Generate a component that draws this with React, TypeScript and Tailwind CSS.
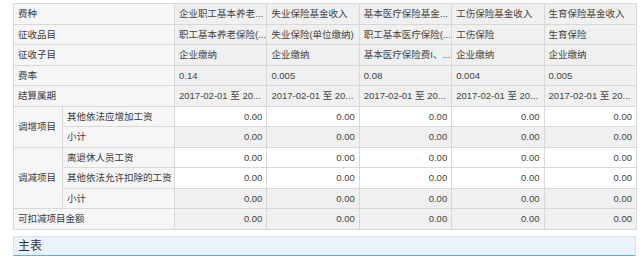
const font = { fontFamily: '"Liberation Sans", "Noto Sans CJK SC", sans-serif' };

const cols = ["yl", "sy", "yb", "gs", "sb"];

const infoRows = [
  { label: "费种", values: ["企业职工基本养老...", "失业保险基金收入", "基本医疗保险基金...", "工伤保险基金收入", "生育保险基金收入"] },
  { label: "征收品目", values: ["职工基本养老保险(...", "失业保险(单位缴纳)", "职工基本医疗保险(...", "工伤保险", "生育保险"] },
  { label: "征收子目", values: ["企业缴纳", "企业缴纳", "基本医疗保险费I、...", "企业缴纳", "企业缴纳"] },
  { label: "费率", values: ["0.14", "0.005", "0.08", "0.004", "0.005"] },
  { label: "结算属期", values: Array(5).fill("2017-02-01 至 20...") },
];

const cell = "border border-[#d8d8d8] h-[20.5px] px-[4px] whitespace-nowrap overflow-hidden";
const label = `${cell} bg-[#f6f6f6] text-[#3a3a3a]`;

function Amounts({ editable }: { editable: boolean }) {
  return (
    <>
      {cols.map((c) => (
        <td key={c} className={`${cell} text-right text-[#444] ${editable ? "bg-white" : "bg-[#f0f0f0]"}`}>
          0.00
        </td>
      ))}
    </>
  );
}

export default function App() {
  return (
    <div className="w-[640px] h-[256px] bg-white overflow-hidden pt-[3px] pl-[13px] text-[9.5px]" style={font}>
      <table className="table-fixed border-collapse w-[623px] leading-none">
        <colgroup>
          <col className="w-[49px]" />
          <col className="w-[112px]" />
          {cols.map((c) => (
            <col key={c} className="w-[92.4px]" />
          ))}
        </colgroup>
        <tbody>
          {infoRows.map((r) => (
            <tr key={r.label}>
              <td colSpan={2} className={label}>{r.label}</td>
              {r.values.map((v, i) => (
                <td key={i} className={`${cell} bg-[#f0f0f0] text-[#444]`}>{v}</td>
              ))}
            </tr>
          ))}

          <tr>
            <td rowSpan={2} className={label}>调增项目</td>
            <td className={label}>其他依法应增加工资</td>
            <Amounts editable />
          </tr>
          <tr>
            <td className={label}>小计</td>
            <Amounts editable={false} />
          </tr>

          <tr>
            <td rowSpan={3} className={label}>调减项目</td>
            <td className={label}>离退休人员工资</td>
            <Amounts editable />
          </tr>
          <tr>
            <td className={label}>其他依法允许扣除的工资</td>
            <Amounts editable />
          </tr>
          <tr>
            <td className={label}>小计</td>
            <Amounts editable={false} />
          </tr>

          <tr>
            <td colSpan={2} className={label}>可扣减项目金额</td>
            <Amounts editable={false} />
          </tr>
        </tbody>
      </table>

      <div className="mt-[6px] w-[623px] h-[21px] bg-[#eaf2fb] border border-[#d3e2f2] border-b-2 border-b-[#5fb0d8] flex items-center pl-[4px] text-[12px] text-[#333]">
        主表
      </div>
    </div>
  );
}
